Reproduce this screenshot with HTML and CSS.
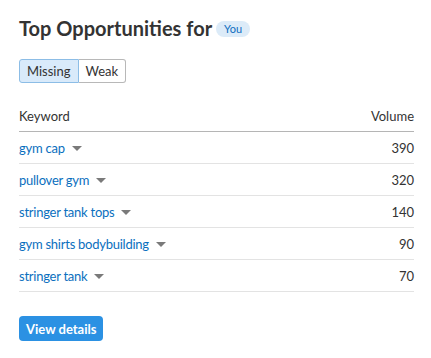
FILE: index.html
```html
<!DOCTYPE html>
<html>
<head>
<meta charset="utf-8">
<link rel="stylesheet" href="styles.css">
</head>
<body>
<div class="card">
  <h1 class="title">Top Opportunities for <span class="badge">You</span></h1>
  <div class="toggle">
    <button class="seg active">Missing</button><button class="seg">Weak</button>
  </div>
  <div class="table">
    <div class="row head"><span>Keyword</span><span>Volume</span></div>
    <div class="row"><a class="kw">gym cap<i class="caret"></i></a><span class="num">390</span></div>
    <div class="row"><a class="kw">pullover gym<i class="caret"></i></a><span class="num">320</span></div>
    <div class="row"><a class="kw">stringer tank tops<i class="caret"></i></a><span class="num">140</span></div>
    <div class="row"><a class="kw">gym shirts bodybuilding<i class="caret"></i></a><span class="num">90</span></div>
    <div class="row"><a class="kw">stringer tank<i class="caret"></i></a><span class="num">70</span></div>
  </div>
  <button class="btn">View details</button>
</div>
</body>
</html>
```
FILE: styles.css
```css
* { box-sizing: border-box; }
body {
  margin: 0;
  background: #fff;
  font-family: Lato, "Open Sans", sans-serif;
  color: #333;
}
.card {
  padding: 16px 17px 0 19px;
  display: flex;
  flex-direction: column;
  align-items: flex-start;
}
.title {
  margin: 0;
  font-size: 20px;
  line-height: 24px;
  font-weight: 700;
  color: #333;
  display: flex;
  align-items: center;
  gap: 4px;
}
.badge {
  display: inline-block;
  background: #dcebf8;
  color: #0f6dbf;
  font-size: 11px;
  font-weight: 400;
  line-height: 16px;
  height: 16px;
  padding: 0 8px;
  border-radius: 8px;
  margin-top: 2px;
}
.toggle {
  margin-top: 19px;
  display: flex;
}
.seg {
  font-family: inherit;
  font-size: 13px;
  color: #333;
  height: 24px;
  padding: 0 7px;
  background: #fff;
  border: 1px solid #b8b8b8;
  margin: 0;
  cursor: pointer;
}
.seg:first-child { border-radius: 3px 0 0 3px; }
.seg:last-child { border-radius: 0 3px 3px 0; border-left: none; }
.seg.active {
  background: #d9eafa;
  border-color: #8cbde6;
}
.table {
  margin-top: 17px;
  width: 100%;
  display: flex;
  flex-direction: column;
}
.row {
  display: flex;
  justify-content: space-between;
  align-items: center;
  height: 32px;
  border-bottom: 1px solid #e3e3e3;
  font-size: 13px;
}
.row.head {
  border-bottom-color: #b5b5b5;
  color: #333;
}
.kw {
  color: #0b6fbe;
  display: flex;
  align-items: center;
  cursor: pointer;
  letter-spacing: -0.25px;
}
.caret {
  display: inline-block;
  width: 0;
  height: 0;
  margin-left: 7px;
  margin-top: 1px;
  border-left: 5px solid transparent;
  border-right: 5px solid transparent;
  border-top: 5px solid #7a7a7a;
}
.num { color: #333; }
.btn {
  margin-top: 24px;
  font-family: inherit;
  font-size: 13px;
  font-weight: 700;
  color: #fff;
  background: #2b91e3;
  border: none;
  border-radius: 4px;
  height: 25px;
  padding: 0 7px;
  cursor: pointer;
}
```
